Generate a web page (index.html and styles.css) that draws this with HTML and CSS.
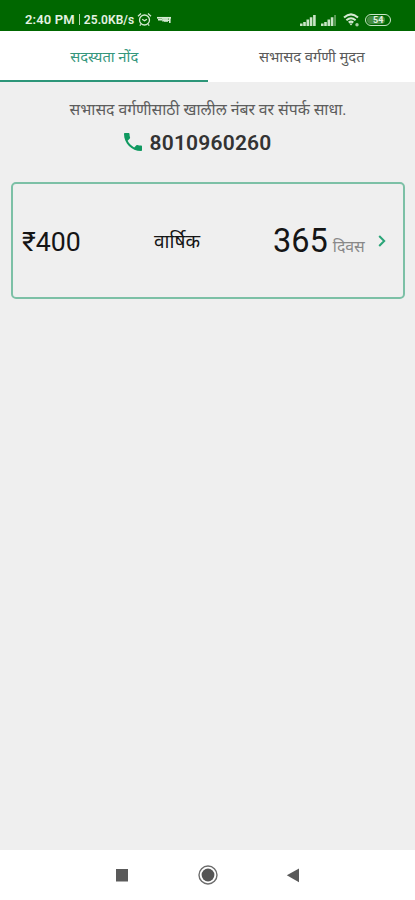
FILE: index.html
```html
<!DOCTYPE html>
<html lang="mr">
<head>
<meta charset="utf-8">
<meta name="viewport" content="width=device-width, initial-scale=1">
<title>सदस्यता नोंद</title>
<link rel="stylesheet" href="styles.css">
</head>
<body>
<div class="screen">
  <header class="status">
    <div class="status-left">
      <span class="clock">2:40 PM</span><span class="divider"></span><span class="speed">25.0KB/s</span>
      <svg class="alarm" width="15" height="15" viewBox="0 0 15 15" fill="none" stroke="#d4ead2" stroke-width="1.3"><circle cx="7.5" cy="8" r="5"/><path d="M1 4.2 4 1.6M14 4.2 11 1.6M5.2 7.2l2.3 1.6 2.4-1.6M3.8 12.4 2.8 13.6M11.2 12.4l1 1.2"/></svg>
      <svg class="app-mark" width="14" height="8" viewBox="0 0 14 8" fill="none" stroke="#d4ead2"><path d="M0 1.8h14" stroke-width="1.7"/><path d="M1 3.8h4M6 2v3.5M8 2v4M10 2v4M12.8 2v5M6 4.3h6" stroke-width="1.6"/></svg>
    </div>
    <div class="status-right">
      <svg class="signal" width="16" height="12" viewBox="0 0 16 12" fill="#c9e5c6"><path d="M0 9.5h2.6V12H0zM3.2 8h2.6v4H3.2zM6.5 5.5h2.6V12H6.5zM9.8 3.3h2.6V12H9.8zM13.1 1h2.6v11h-2.6z"/></svg>
      <svg class="signal second" width="16" height="12" viewBox="0 0 16 12"><path fill="#c9e5c6" d="M0 9.5h2.6V12H0zM3.2 8h2.6v4H3.2zM6.5 5.5h2.6V12H6.5zM9.8 3.3h2.6V12H9.8z"/><path fill="#5c9e58" d="M13.1 1H15v11h-1.9z"/></svg>
      <svg class="wifi" width="17" height="14" viewBox="0 0 17 14" fill="none" stroke="#d4ead2" stroke-width="2"><path d="M1 4.6Q8 -1.8 15 4.6M3.4 7.2Q8 3.2 12.6 7.2M5.7 9.6Q8 7.6 10.3 9.6"/><path d="m6.3 10.6 1.7 2 1.7-2z" fill="#d4ead2" stroke="none"/><circle cx="14" cy="11.7" r="1.7" fill="#a8d0a4" stroke="none"/></svg>
      <span class="battery"><span class="level">54</span></span>
    </div>
  </header>
  <nav class="tabs">
    <a class="tab active"><span class="tab-label">सदस्यता नोंद</span></a>
    <a class="tab"><span class="tab-label">सभासद वर्गणी मुदत</span></a>
  </nav>
  <main class="content">
    <p class="notice">सभासद वर्गणीसाठी खालील नंबर वर संपर्क साधा.</p>
    <div class="phone">
      <svg width="18" height="18" viewBox="3 3 18 18" fill="#0f9960"><path d="M6.62 10.79c1.44 2.83 3.76 5.14 6.59 6.59l2.2-2.2c.27-.27.67-.36 1.02-.24 1.12.37 2.33.57 3.57.57.55 0 1 .45 1 1V20c0 .55-.45 1-1 1-9.39 0-17-7.61-17-17 0-.55.45-1 1-1h3.5c.55 0 1 .45 1 1 0 1.25.2 2.45.57 3.57.11.35.03.74-.25 1.02l-2.2 2.2z"/></svg>
      <span class="number">8010960260</span>
    </div>
    <section class="plan">
      <span class="price">₹400</span>
      <span class="period">वार्षिक</span>
      <span class="days"><span class="count">365</span><span class="unit">दिवस</span></span>
      <svg class="chevron" width="8" height="12" viewBox="0 0 8 12" fill="none" stroke="#2aa578" stroke-width="2"><path d="m1.2 1 5 5-5 5"/></svg>
    </section>
  </main>
  <footer class="navbar">
    <svg width="20" height="20" viewBox="0 0 20 20"><path fill="#5a5a5a" d="M4 4h12v12.5H4z"/></svg>
    <svg width="20" height="20" viewBox="0 0 20 20"><circle cx="10" cy="10" r="9" fill="none" stroke="#6c6c6c" stroke-width="1.4"/><circle cx="10" cy="10" r="6.4" fill="#555"/></svg>
    <svg width="20" height="20" viewBox="0 0 20 20"><path fill="#5a5a5a" d="M15 3.4v13.8L2.8 10.3z"/></svg>
  </footer>
</div>
</body>
</html>
```
FILE: styles.css
```css
* { box-sizing: border-box; }
body { margin: 0; font-family: Roboto, "Noto Sans", sans-serif; }
.screen { width: 415px; height: 900px; display: flex; flex-direction: column; background: #efefef; overflow: hidden; }
.status { height: 31px; background: #006700; color: #e4f2e2; display: flex; justify-content: space-between; padding: 9px 24px 0 25px; }
.status-left, .status-right { display: flex; align-items: center; height: 21px; white-space: nowrap; }
.clock { font-size: 13px; font-weight: 600; letter-spacing: .15px; }
.divider { width: 1px; height: 11px; background: #b5d8b2; margin: 0 4px; }
.speed { font-size: 12px; font-weight: 600; letter-spacing: .05px; }
.alarm { margin-left: 3px; }
.app-mark { margin-left: 5px; }
.signal.second { margin-left: 5px; }
.wifi { margin-left: 6px; }
.battery { width: 26px; height: 12px; margin-left: 5px; border: 1px solid #c9e5c6; border-radius: 6px; display: flex; padding: 1px; }
.level { width: 18px; border-radius: 4px; background: #438c40; font-size: 9px; font-weight: 700; line-height: 8px; padding-left: 6px; }
.tabs { height: 51px; background: #fff; display: flex; }
.tab { flex: 1; display: flex; justify-content: center; align-items: center; padding-left: 1px; font-size: 14.8px; color: #5b5b5b; border-bottom: 2px solid transparent; }
.tab.active { color: #35967c; border-bottom-color: #2d9679; }
.tab-label { white-space: nowrap; }
.content { flex: 1; padding: 0 10px 0 11px; }
.notice { margin: 15px 0 0; height: 26px; line-height: 26px; text-align: center; font-size: 15.8px; color: #5d5d5d; white-space: nowrap; }
.phone { height: 40px; display: flex; justify-content: center; align-items: center; gap: 8px; padding-right: 21px; }
.phone svg { margin-bottom: 2px; }
.number { font-size: 21px; font-weight: 600; color: #333; letter-spacing: .2px; }
.plan { height: 117px; margin-top: 19px; border: 2px solid #7cc0a6; border-radius: 5px; display: grid; grid-template-columns: 132px 119px 91px 1fr; align-items: center; padding: 0 0 0 9px; color: #151515; }
.price { font-size: 26.7px; padding-top: 2px; }
.period { font-size: 19px; }
.days { display: flex; align-items: baseline; white-space: nowrap; gap: 5px; padding-top: 1px; }
.count { font-size: 32.5px; }
.unit { font-size: 15.8px; color: #888; }
.chevron { margin-left: 14px; }
.navbar { height: 50px; background: #fff; display: flex; justify-content: center; gap: 66px; align-items: center; }
```
